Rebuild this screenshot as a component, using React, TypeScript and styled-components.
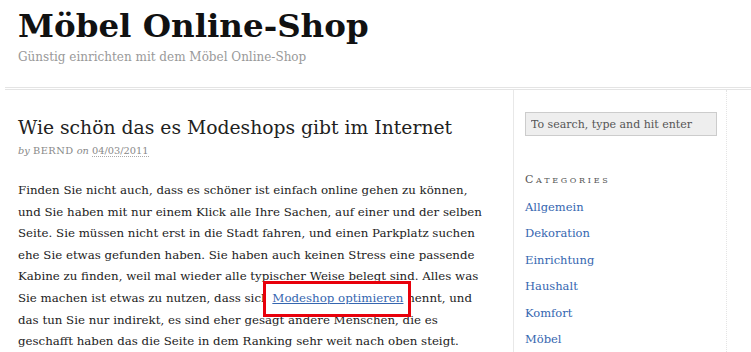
import React from "react";
import styled, { createGlobalStyle } from "styled-components";

const GlobalStyle = createGlobalStyle`
  html, body {
    margin: 0;
    padding: 0;
    background: #fff;
  }
  body {
    font-family: "DejaVu Serif", Georgia, serif;
    color: #222;
    overflow: hidden;
  }
`;

const Page = styled.div`
  width: 751px;
  height: 352px;
  padding-left: 5px;
  box-sizing: border-box;
  overflow: hidden;
`;

const Header = styled.header`
  padding: 8px 0 0 13px;
  height: 90px;
  box-sizing: border-box;
  border-bottom: 3px double #e4e4e4;
`;

const SiteTitle = styled.h1`
  margin: 0;
  font-size: 32.5px;
  line-height: 36px;
  font-weight: bold;
  color: #111;
`;

const Tagline = styled.p`
  margin: 4px 0 0;
  font-size: 12px;
  line-height: 18px;
  color: #999;
`;

const Main = styled.div`
  display: flex;
  align-items: stretch;
  height: 262px;
`;

const Content = styled.main`
  width: 508px;
  padding: 24px 0 0 13px;
  box-sizing: border-box;
`;

const PostTitle = styled.h2`
  margin: 0;
  font-size: 18.75px;
  line-height: 28px;
  font-weight: normal;
  color: #222;
  white-space: nowrap;
`;

const Meta = styled.div`
  margin-top: 2px;
  font-size: 9.8px;
  line-height: 14px;
  color: #888;
`;

const MetaWord = styled.em`
  font-style: italic;
`;

const Author = styled.span`
  text-transform: uppercase;
  letter-spacing: 0.5px;
`;

const DateLink = styled.span`
  border-bottom: 1px dotted #aaa;
`;

const Body = styled.p`
  margin: 22px 0 0;
  width: 490px;
  font-size: 11.8px;
  line-height: 21.6px;
  color: #222;
  white-space: nowrap;
`;

const Highlight = styled.a`
  position: relative;
  z-index: 0;
  color: #3566b0;
  text-decoration: underline;

  &::before {
    content: "";
    position: absolute;
    z-index: -1;
    left: -9px;
    right: -8px;
    top: -10px;
    bottom: -12px;
    background: #fff;
    border: 3px solid #e8000b;
  }
`;

const Sidebar = styled.aside`
  width: 214px;
  padding: 22px 10px 0 11px;
  box-sizing: border-box;
  border-left: 1px solid #e8e8e8;
  border-right: 1px dotted #e4e4e4;
`;

const Search = styled.input`
  display: block;
  width: 192px;
  height: 24px;
  box-sizing: border-box;
  padding: 0 5px;
  border: 1px solid #ccc;
  background: #eee;
  font-family: "DejaVu Serif", Georgia, serif;
  font-size: 11px;
  color: #555;
  outline: none;

  &::placeholder {
    color: #555;
    opacity: 1;
  }
`;

const WidgetTitle = styled.h3`
  margin: 36px 0 0;
  font-size: 11px;
  line-height: 16px;
  font-weight: normal;
  font-variant: small-caps;
  letter-spacing: 2.7px;
  color: #555;
`;

const CategoryList = styled.ul`
  list-style: none;
  margin: 6px 0 0;
  padding: 0;
`;

const CategoryItem = styled.li`
  font-size: 11.5px;
  line-height: 26.4px;
`;

const CategoryLink = styled.a`
  color: #3566b0;
  text-decoration: none;
`;

const categories = [
  "Allgemein",
  "Dekoration",
  "Einrichtung",
  "Haushalt",
  "Komfort",
  "Möbel",
];

export default function App() {
  return (
    <>
      <GlobalStyle />
      <Page>
        <Header>
          <SiteTitle>Möbel Online-Shop</SiteTitle>
          <Tagline>Günstig einrichten mit dem Möbel Online-Shop</Tagline>
        </Header>
        <Main>
          <Content>
            <PostTitle>Wie schön das es Modeshops gibt im Internet</PostTitle>
            <Meta>
              <MetaWord>by</MetaWord> <Author>Bernd</Author>{" "}
              <MetaWord>on</MetaWord> <DateLink>04/03/2011</DateLink>
            </Meta>
            <Body>
              Finden Sie nicht auch, dass es schöner ist einfach online gehen
              zu können,
              <br />
              und Sie haben mit nur einem Klick alle Ihre Sachen, auf einer
              und der selben
              <br />
              Seite. Sie müssen nicht erst in die Stadt fahren, und einen
              Parkplatz suchen
              <br />
              ehe Sie etwas gefunden haben. Sie haben auch keinen Stress eine
              passende
              <br />
              Kabine zu finden, weil mal wieder alle typischer Weise belegt
              sind. Alles was
              <br />
              Sie machen ist etwas zu nutzen, dass sich{" "}
              <Highlight href="#">Modeshop optimieren</Highlight> nennt, und
              <br />
              das tun Sie nur indirekt, es sind eher gesagt andere Menschen,
              die es
              <br />
              geschafft haben das die Seite in dem Ranking sehr weit nach oben
              steigt.
            </Body>
          </Content>
          <Sidebar>
            <Search placeholder="To search, type and hit enter" />
            <WidgetTitle>Categories</WidgetTitle>
            <CategoryList>
              {categories.map((c) => (
                <CategoryItem key={c}>
                  <CategoryLink href="#">{c}</CategoryLink>
                </CategoryItem>
              ))}
            </CategoryList>
          </Sidebar>
        </Main>
      </Page>
    </>
  );
}
